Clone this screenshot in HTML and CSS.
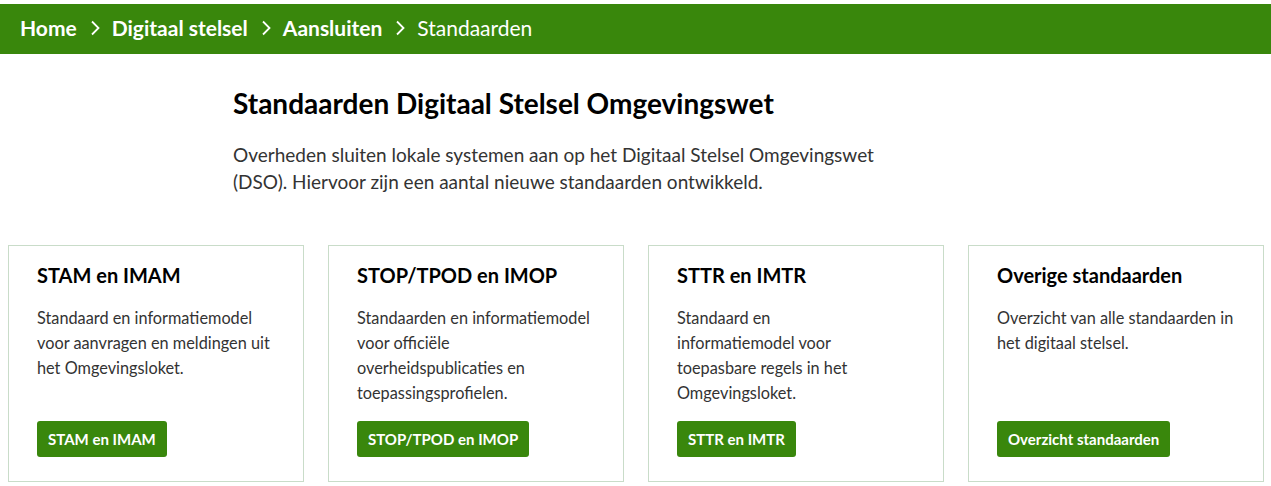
FILE: index.html
```html
<!DOCTYPE html>
<html lang="nl">
<head>
<meta charset="utf-8">
<link rel="stylesheet" href="styles.css">
</head>
<body>
<nav class="crumbs">
  <a class="crumb" href="#">Home</a>
  <svg class="chev" viewBox="0 0 10 16" width="10" height="16"><path d="M2 1.5l6.5 6.5-6.5 6.5" fill="none" stroke="#fff" stroke-width="1.8"/></svg>
  <a class="crumb" href="#">Digitaal stelsel</a>
  <svg class="chev" viewBox="0 0 10 16" width="10" height="16"><path d="M2 1.5l6.5 6.5-6.5 6.5" fill="none" stroke="#fff" stroke-width="1.8"/></svg>
  <a class="crumb" href="#">Aansluiten</a>
  <svg class="chev" viewBox="0 0 10 16" width="10" height="16"><path d="M2 1.5l6.5 6.5-6.5 6.5" fill="none" stroke="#fff" stroke-width="1.8"/></svg>
  <span class="crumb current">Standaarden</span>
</nav>
<main>
  <section class="intro">
    <h1>Standaarden Digitaal Stelsel Omgevingswet</h1>
    <p>Overheden sluiten lokale systemen aan op het Digitaal Stelsel Omgevingswet (DSO). Hiervoor zijn een aantal nieuwe standaarden ontwikkeld.</p>
  </section>
  <section class="cards">
    <article class="card">
      <h2>STAM en IMAM</h2>
      <p>Standaard en informatiemodel voor aanvragen en meldingen uit het Omgevingsloket.</p>
      <a class="btn" href="#">STAM en IMAM</a>
    </article>
    <article class="card">
      <h2>STOP/TPOD en IMOP</h2>
      <p>Standaarden en informatiemodel voor officiële overheidspublicaties en toepassingsprofielen.</p>
      <a class="btn" href="#">STOP/TPOD en IMOP</a>
    </article>
    <article class="card">
      <h2>STTR en IMTR</h2>
      <p class="narrow">Standaard en informatiemodel voor toepasbare regels in het Omgevingsloket.</p>
      <a class="btn" href="#">STTR en IMTR</a>
    </article>
    <article class="card">
      <h2>Overige standaarden</h2>
      <p>Overzicht van alle standaarden in het digitaal stelsel.</p>
      <a class="btn" href="#">Overzicht standaarden</a>
    </article>
  </section>
</main>
</body>
</html>
```
FILE: styles.css
```css
* { box-sizing: border-box; }
html, body { margin: 0; padding: 0; background: #fff; }
body {
  font-family: Lato, "Liberation Sans", sans-serif;
  color: #333;
}
.crumbs {
  margin-top: 4px;
  height: 50px;
  background: #39870c;
  display: flex;
  align-items: center;
  padding: 0 0 3px 20px;
}
.crumb {
  color: #fff;
  text-decoration: none;
  font-weight: 700;
  font-size: 21px;
}
.crumb.current { font-weight: 400; }
.chev { margin: 0 12px 0 13px; }
main { padding: 0 8px; }
.intro {
  padding-left: 225px;
  padding-top: 31px;
}
h1 {
  margin: 0;
  font-size: 28px;
  font-weight: 700;
  color: #000;
  line-height: 36px;
}
.intro p {
  margin: 20px 0 0;
  font-size: 19px;
  line-height: 27px;
  max-width: 660px;
}
.cards {
  margin-top: 50px;
  display: grid;
  grid-template-columns: repeat(4, 296px);
  column-gap: 24px;
}
.card {
  border: 1px solid #c9dcc9;
  height: 237px;
  padding: 15px 28px 24px;
  display: flex;
  flex-direction: column;
  align-items: flex-start;
}
.card h2 {
  margin: 0;
  font-size: 20px;
  line-height: 28px;
  color: #000;
  font-weight: 700;
}
.card p {
  margin: 16px 0 0;
  font-size: 16.3px;
  line-height: 25px;
}
.card p.narrow { max-width: 200px; }
.btn {
  margin-top: auto;
  background: #39870c;
  color: #fff;
  text-decoration: none;
  font-weight: 700;
  font-size: 15px;
  height: 36px;
  line-height: 36px;
  padding: 0 11px;
  border-radius: 3px;
}
```
